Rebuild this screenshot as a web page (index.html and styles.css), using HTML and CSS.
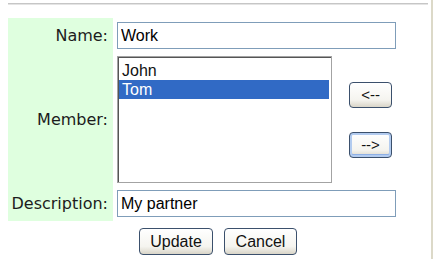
FILE: index.html
```html
<!DOCTYPE html>
<html lang="en">
<head>
    <meta charset="UTF-8">
    <title>Edit group</title>
    <link rel="stylesheet" href="styles.css">
</head>
<body>
    <div class="frame">
        <div class="rule"></div>

        <form class="group-form" onsubmit="return false">
            <label class="label" for="groupName">Name:</label>
            <div class="field">
                <input type="text" id="groupName" class="text-input" value="Work">
            </div>

            <div class="label">Member:</div>
            <div class="field member-field">
                <ul class="listbox" id="memberList">
                    <li class="option">John</li>
                    <li class="option selected">Tom</li>
                </ul>
                <div class="move-buttons">
                    <button class="xp-button small" type="button">&lt;--</button>
                    <button class="xp-button small focused" type="button">--&gt;</button>
                </div>
            </div>

            <label class="label" for="groupDesc">Description:</label>
            <div class="field last">
                <input type="text" id="groupDesc" class="text-input" value="My partner">
            </div>

            <div class="actions">
                <button class="xp-button update" type="submit">Update</button>
                <button class="xp-button cancel" type="button">Cancel</button>
            </div>
        </form>
    </div>

    <script>
        // Clicking an option selects it
        document.querySelectorAll('#memberList .option').forEach(function (opt) {
            opt.addEventListener('click', function () {
                document.querySelectorAll('#memberList .option').forEach(function (o) {
                    o.classList.remove('selected');
                });
                opt.classList.add('selected');
            });
        });
    </script>
</body>
</html>
```

FILE: styles.css
```css
* {
    margin: 0;
    padding: 0;
    box-sizing: border-box;
}

body {
    background: #ffffff;
    color: #111111;
    font-family: "DejaVu Sans", Verdana, sans-serif;
}

.frame {
    width: 433px;
    height: 259px;
    padding: 3px 0 0 8px;
    border-right: 2px solid #dcd9c8;
}

.rule {
    width: 420px;
    height: 2px;
    background: #c6c6c6;
    border-bottom: 1px solid #e4e4e4;
}

.group-form {
    display: grid;
    grid-template-columns: 105px 1fr;
    column-gap: 4px;
    width: 420px;
    margin-top: 13px;
}

.label {
    display: flex;
    align-items: center;
    justify-content: flex-end;
    padding-right: 5px;
    background: #dfffdf;
    font-size: 16px;
    color: #1c1c1c;
}

.field {
    padding: 4px 0 3px;
}

.field.last {
    padding-bottom: 4px;
}

.text-input {
    display: block;
    width: 279px;
    height: 27px;
    padding: 0 3px;
    border: 1px solid #7f9db9;
    font-family: "Liberation Sans", Arial, sans-serif;
    font-size: 16px;
    color: #000000;
    outline: none;
}

.member-field {
    display: flex;
    align-items: center;
    gap: 17px;
}

.listbox {
    list-style: none;
    width: 215px;
    height: 127px;
    padding: 4px 2px 0 1px;
    border: 1px solid #a3a3a3;
    box-shadow: inset 1px 1px 0 #555555;
    font-family: "Liberation Sans", Arial, sans-serif;
    font-size: 16px;
}

.option {
    height: 19px;
    line-height: 19px;
    padding-left: 3px;
    cursor: default;
}

.option.selected {
    background: #316ac5;
    color: #ffffff;
}

.move-buttons {
    display: flex;
    flex-direction: column;
    gap: 24px;
}

.xp-button {
    height: 27px;
    border: 1px solid #3b506c;
    border-radius: 4px;
    background: linear-gradient(#ffffff, #f5f4ef 70%, #d9d5c8);
    font-family: "Liberation Sans", Arial, sans-serif;
    font-size: 16px;
    color: #111111;
    cursor: pointer;
}

.xp-button.small {
    width: 43px;
    height: 26px;
    font-size: 15px;
}

.xp-button.focused {
    box-shadow: inset 0 0 0 2px #b2cbef, inset 0 -1px 0 2px #8eb0e6;
}

.actions {
    grid-column: 1 / -1;
    display: flex;
    justify-content: center;
    gap: 11px;
    padding-top: 7px;
}

.update {
    width: 74px;
}

.cancel {
    width: 73px;
}
```
